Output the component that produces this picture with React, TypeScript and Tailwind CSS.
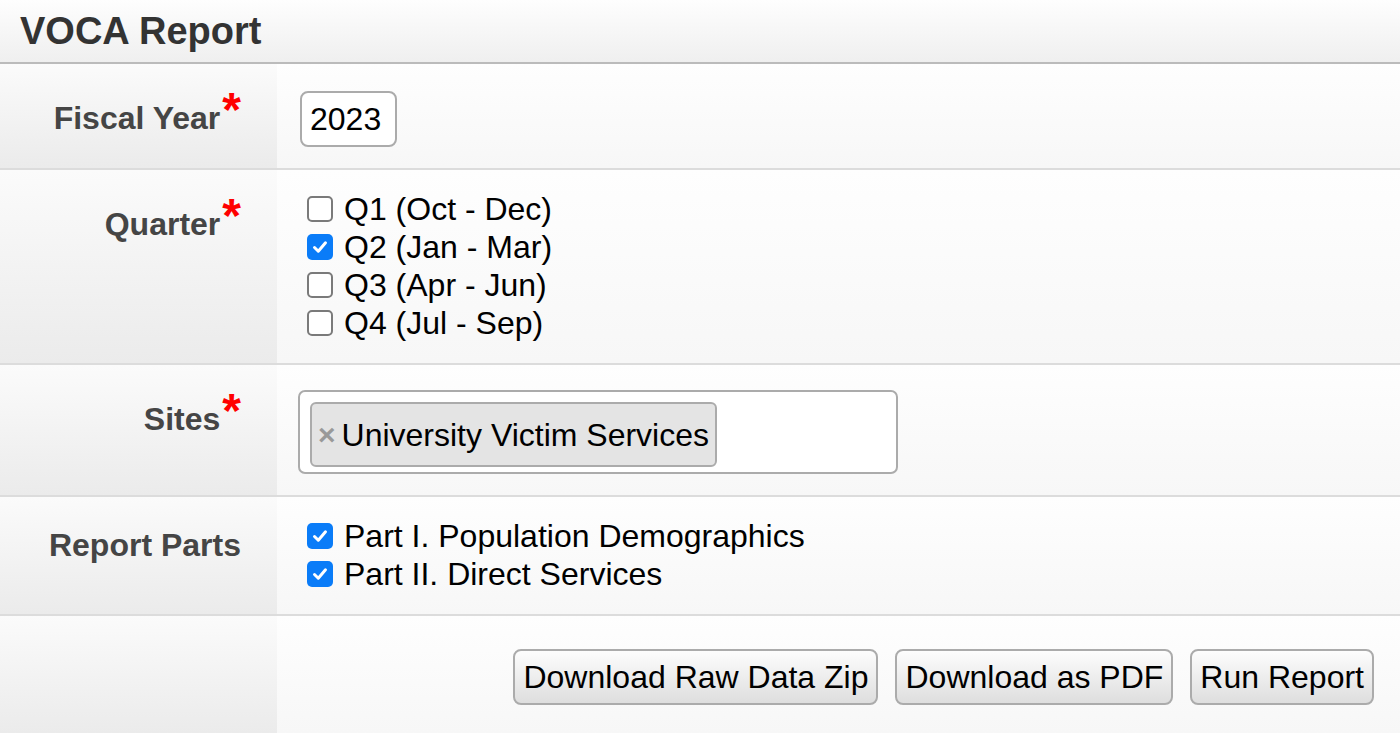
import React from "react";

const font = { fontFamily: '"Liberation Sans", Arial, Helvetica, sans-serif' };

function Box({ checked }: { checked: boolean }) {
  return checked ? (
    <span className="inline-flex h-[26px] w-[26px] shrink-0 items-center justify-center rounded-[5px] bg-[#0a7cf8]">
      <svg width="18" height="18" viewBox="0 0 18 18">
        <path d="M3.5 9.5 L7.3 13.2 L14.5 4.8" fill="none" stroke="#fff" strokeWidth="3" strokeLinecap="round" strokeLinejoin="round" />
      </svg>
    </span>
  ) : (
    <span className="inline-block h-[26px] w-[26px] shrink-0 rounded-[5px] border-2 border-[#7a7a7a] bg-white" />
  );
}

function Check({ checked, label }: { checked: boolean; label: string }) {
  return (
    <div className="flex h-[38px] items-center">
      <span className="ml-[7px] mr-[11px] flex"><Box checked={checked} /></span>
      <span className="text-[32px] leading-[38px] text-black">{label}</span>
    </div>
  );
}

function Label({ text, req }: { text: string; req?: boolean }) {
  return (
    <div className={`flex w-[277px] shrink-0 justify-end bg-gradient-to-b from-[#fbfbfb] to-[#ebebeb] pr-[36px] ${req ? "pt-[36px]" : "pt-[30px]"}`}>
      <div className="text-[32px] font-bold leading-[36px] text-[#454545]">
        {text}
        {req && <span className="relative top-[-3px] ml-[2px] text-[48px] leading-[0px] text-[#ff0000]">*</span>}
      </div>
    </div>
  );
}

function Row({ children, label, req, last }: { children: React.ReactNode; label: string; req?: boolean; last?: boolean }) {
  return (
    <div className={`flex ${last ? "" : "border-b-2 border-[#dcdcdc]"}`}>
      <Label text={label} req={req} />
      <div className="flex-1 bg-gradient-to-b from-[#fefefe] to-[#f7f7f7] pl-[23px] pt-[20px] pb-[21px]">{children}</div>
    </div>
  );
}

function Btn({ children }: { children: React.ReactNode }) {
  return (
    <button className="h-[56px] rounded-[8px] border-2 border-[#ababab] bg-gradient-to-b from-[#fdfdfd] to-[#dedede] px-[8px] text-[32px] leading-none text-black">
      {children}
    </button>
  );
}

export default function App() {
  return (
    <div className="min-h-[733px] w-[1400px] overflow-hidden bg-white" style={font}>
      <div className="flex h-[64px] items-center border-b-2 border-[#bbbbbb] bg-gradient-to-b from-[#fefefe] to-[#efefef] pl-[20px]">
        <h1 className="text-[38px] font-bold leading-none text-[#333333]">VOCA Report</h1>
      </div>
      <Row label="Fiscal Year" req>
        <div className="mt-[7px] flex h-[56px] w-[97px] items-center rounded-[8px] border-2 border-[#ababab] bg-white pl-[8px] text-[32px] text-black">2023</div>
      </Row>
      <Row label="Quarter" req>
        <Check checked={false} label="Q1 (Oct - Dec)" />
        <Check checked={true} label="Q2 (Jan - Mar)" />
        <Check checked={false} label="Q3 (Apr - Jun)" />
        <Check checked={false} label="Q4 (Jul - Sep)" />
      </Row>
      <Row label="Sites" req>
        <div className="ml-[-2px] mt-[5px] flex h-[84px] w-[600px] items-start rounded-[7px] border-2 border-[#ababab] bg-white pl-[10px] pt-[10px]">
          <div className="flex h-[65px] items-center rounded-[6px] border-2 border-[#ababab] bg-[#e4e4e4] pl-[6px] pr-[6px]">
            <span className="mr-[6px] text-[30px] font-bold leading-none text-[#999999]">×</span>
            <span className="text-[32px] leading-none text-black">University Victim Services</span>
          </div>
        </div>
      </Row>
      <Row label="Report Parts">
        <Check checked={true} label="Part I. Population Demographics" />
        <Check checked={true} label="Part II. Direct Services" />
      </Row>
      <div className="flex h-[117px]">
        <div className="w-[277px] shrink-0 bg-gradient-to-b from-[#fbfbfb] to-[#ebebeb]" />
        <div className="flex flex-1 items-start justify-end gap-[17px] bg-gradient-to-b from-[#fefefe] to-[#f7f7f7] pr-[26px] pt-[33px]">
          <Btn>Download Raw Data Zip</Btn>
          <Btn>Download as PDF</Btn>
          <Btn>Run Report</Btn>
        </div>
      </div>
    </div>
  );
}
